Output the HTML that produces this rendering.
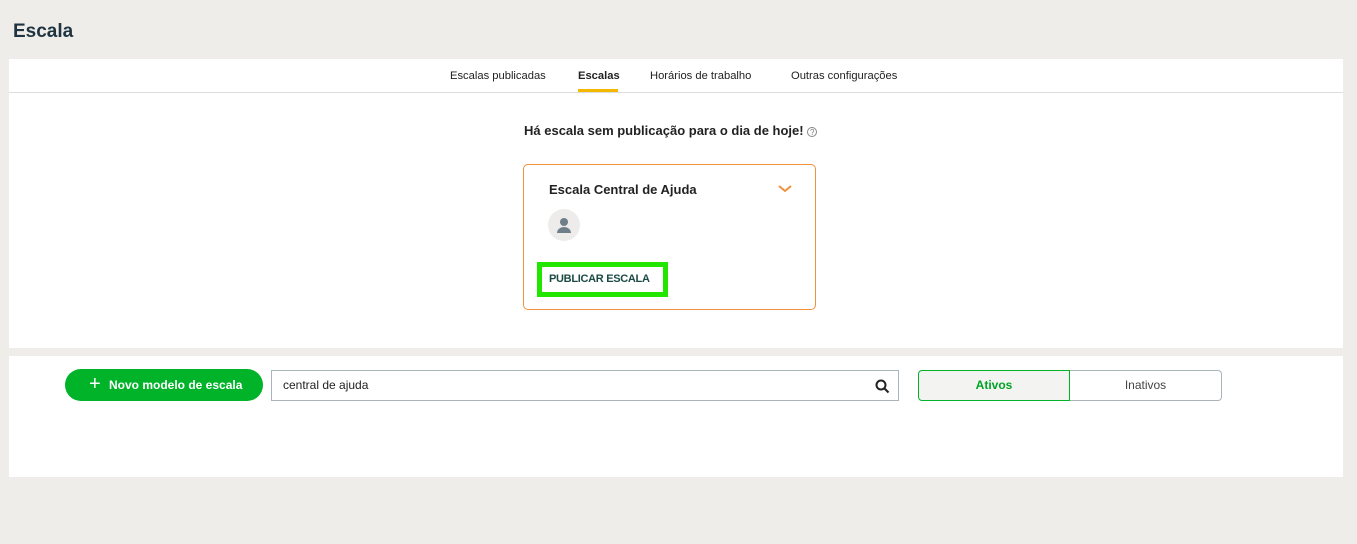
<!DOCTYPE html>
<html><head><meta charset="utf-8"><style>
*{box-sizing:border-box;margin:0;padding:0}
body{width:1357px;height:544px;background:#eeede9;font-family:"Liberation Sans",sans-serif;position:relative;overflow:hidden;color:#222}
.abs{position:absolute}
</style></head><body>
<div class="abs" style="left:13px;top:21px;font-size:19px;font-weight:bold;color:#1f3340">Escala</div>
<div class="abs" style="left:9px;top:59px;width:1334px;height:289px;background:#fff"></div>
<div class="abs" style="left:9px;top:92px;width:1334px;height:1px;background:#ddd"></div>
<div class="abs" style="left:450px;top:70px;font-size:11.2px;color:#222">Escalas publicadas</div>
<div class="abs" style="left:578px;top:70px;font-size:11.2px;font-weight:bold;color:#222">Escalas</div>
<div class="abs" style="left:578px;top:89px;width:40px;height:3px;background:#f5b800"></div>
<div class="abs" style="left:650px;top:70px;font-size:11.2px;color:#222">Horários de trabalho</div>
<div class="abs" style="left:791px;top:70px;font-size:11.2px;color:#222">Outras configurações</div>
<div class="abs" style="left:524px;top:123px;font-size:13px;font-weight:bold;color:#222">Há escala sem publicação para o dia de hoje! <span style="color:#777;font-weight:normal;border:1px solid #888;border-radius:50%;display:inline-block;width:10px;height:10px;line-height:9px;text-align:center;font-size:8px">?</span></div>
<div class="abs" style="left:523px;top:164px;width:293px;height:146px;border:1px solid #f0913c;border-radius:5px"></div>
<div class="abs" style="left:549px;top:182px;font-size:13px;font-weight:bold;color:#222">Escala Central de Ajuda</div>
<svg class="abs" style="left:777px;top:184px" width="16" height="10"><path d="M2 2l6 5 6-5" stroke="#f0913c" stroke-width="2" fill="none"/></svg>
<div class="abs" style="left:548px;top:209px;width:32px;height:32px;border-radius:50%;background:#edecea"></div>
<svg class="abs" style="left:548px;top:209px" width="32" height="32"><circle cx="16" cy="13" r="4" fill="#6f7f8a"/><path d="M9 24a7 6 0 0 1 14 0z" fill="#6f7f8a"/></svg>
<div class="abs" style="left:537px;top:262px;width:131px;height:35px;border:5px solid #22e600"></div>
<div class="abs" style="left:549px;top:273px;font-size:11px;font-weight:bold;color:#1b4a44;letter-spacing:-0.3px">PUBLICAR ESCALA</div>
<div class="abs" style="left:9px;top:356px;width:1334px;height:121px;background:#fff"></div>
<div class="abs" style="left:65px;top:369px;width:198px;height:32px;border-radius:16px;background:#00b328;color:#fff;font-size:12px;font-weight:bold;line-height:32px"><span style="position:absolute;left:24px;top:-1px;font-size:20px;font-weight:normal">+</span><span style="position:absolute;left:44px">Novo modelo de escala</span></div>
<div class="abs" style="left:271px;top:370px;width:628px;height:31px;border:1px solid #aab4bb;font-size:12px;line-height:29px;padding-left:11px;color:#222">central de ajuda</div>
<svg class="abs" style="left:875px;top:379px" width="15" height="15"><circle cx="6" cy="6" r="4.5" stroke="#222" stroke-width="2" fill="none"/><path d="M9.5 9.5l4 4" stroke="#222" stroke-width="2"/></svg>
<div class="abs" style="left:918px;top:370px;width:152px;height:31px;border:1px solid #00b328;border-radius:4px 0 0 4px;background:#f3f3f1;font-size:12px;font-weight:bold;color:#00a326;text-align:center;line-height:29px">Ativos</div>
<div class="abs" style="left:1070px;top:370px;width:152px;height:31px;border:1px solid #aab4bb;border-left:none;border-radius:0 4px 4px 0;font-size:12px;color:#444;text-align:center;line-height:29px">Inativos</div>
</body></html>
